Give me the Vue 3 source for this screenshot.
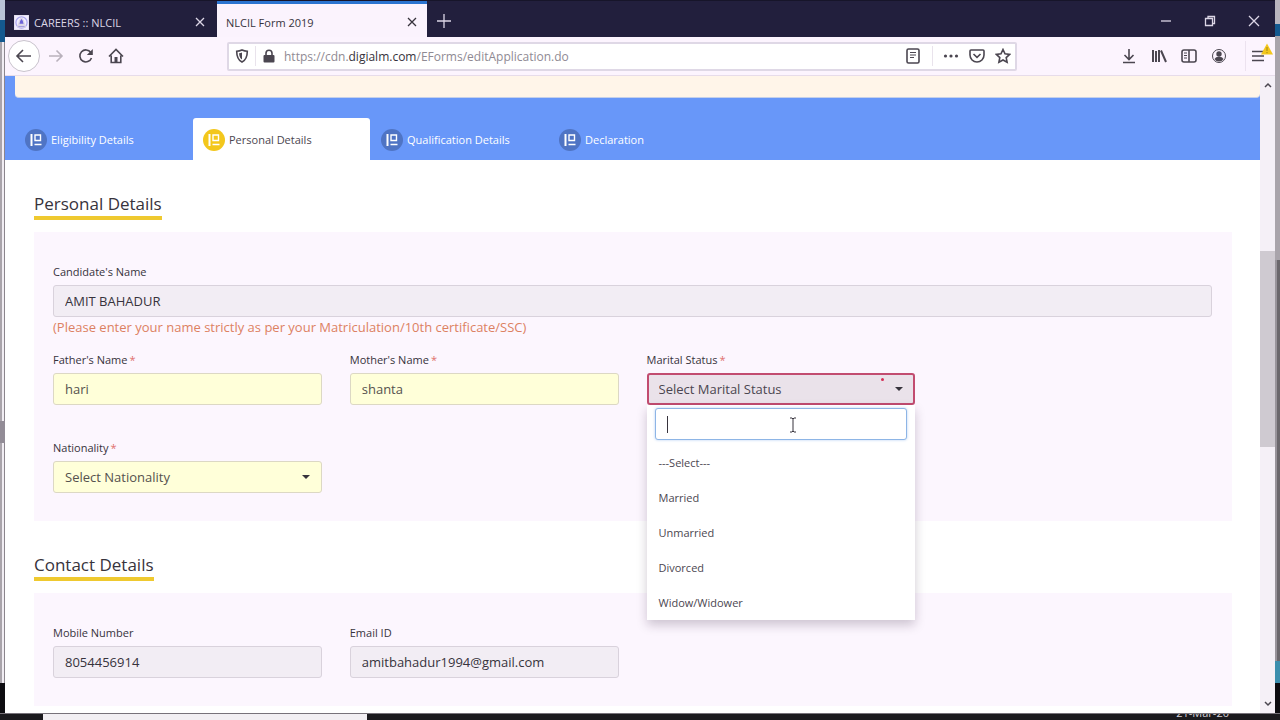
<template>
  <div class="desktop">
    <div class="workspace">
      <div class="edge edge-left">
        <i class="edge-top"></i>
        <i class="edge-blue"></i>
        <i class="edge-lines"></i>
        <i class="edge-mark"></i>
        <i class="edge-lines"></i>
        <i class="edge-dark"></i>
      </div>

      <div class="browser">
        <!-- Tab strip -->
        <header class="tab-strip">
          <div class="tab">
            <svg class="favicon" viewBox="0 0 16 16">
              <rect width="16" height="16" fill="#f1edff" />
              <circle cx="8" cy="8" r="6" fill="none" stroke="#aaa4ee" />
              <path d="M8 3l2 3 1 4H5l1-4zM4 11h8v2H4z" fill="#6c63d8" />
            </svg>
            <span class="tab-title">CAREERS :: NLCIL</span>
            <button class="icon-btn" aria-label="Close tab">
              <svg width="12" height="12" viewBox="0 0 12 12"><path d="M2 2l8 8M10 2l-8 8" /></svg>
            </button>
          </div>
          <div class="tab tab-current">
            <span class="tab-title">NLCIL Form 2019</span>
            <button class="icon-btn" aria-label="Close tab">
              <svg width="12" height="12" viewBox="0 0 12 12"><path d="M2 2l8 8M10 2l-8 8" /></svg>
            </button>
          </div>
          <button class="icon-btn new-tab" aria-label="New tab">
            <svg width="14" height="14" viewBox="0 0 14 14"><path d="M7 0v14M0 7h14" /></svg>
          </button>
          <div class="window-controls">
            <button class="icon-btn" aria-label="Minimize">
              <svg width="12" height="12" viewBox="0 0 12 12"><path d="M1 6h10" /></svg>
            </button>
            <button class="icon-btn" aria-label="Restore">
              <svg width="12" height="12" viewBox="0 0 12 12">
                <path d="M1.500 3.500h7v7h-7zM4 3V1.500h6.500V8.500H9" />
              </svg>
            </button>
            <button class="icon-btn" aria-label="Close">
              <svg width="12" height="12" viewBox="0 0 12 12"><path d="M1 1l10 10M11 1L1 11" /></svg>
            </button>
          </div>
        </header>

        <!-- Toolbar -->
        <nav class="toolbar">
          <div class="nav-buttons">
            <button class="icon-btn back" aria-label="Back">
              <svg width="18" height="18" viewBox="0 0 18 18"><path d="M16 9H2.500M8 3L2 9l6 6" /></svg>
            </button>
            <button class="icon-btn forward" aria-label="Forward">
              <svg width="16" height="16" viewBox="0 0 16 16"><path d="M1 8h13M8.500 2.500L14 8l-5.500 5.500" /></svg>
            </button>
            <button class="icon-btn" aria-label="Reload">
              <svg width="16" height="16" viewBox="0 0 16 16">
                <path d="M12.800 4.500A6 6 0 1 0 13.500 10" />
                <path class="solid" d="M14.800 1v6H8.800z" />
              </svg>
            </button>
            <button class="icon-btn" aria-label="Home">
              <svg width="16" height="16" viewBox="0 0 16 16">
                <path d="M1 8.500L8 1.500l7 7M3.200 7.500v7h9.600v-7" />
                <path class="solid" d="M6.500 9h3v5.500h-3z" />
              </svg>
            </button>
          </div>

          <div class="url-bar">
            <div class="url-shield">
              <svg width="14" height="14" viewBox="0 0 14 14">
                <path d="M7 1c2 .9 3.500 1.200 5.300 1.200C12.300 7.500 11 11 7 13 3 11 1.700 7.500 1.700 2.200 3.500 2.200 5 1.900 7 1z" />
                <path class="solid" d="M7 3.500v7C5 9.300 4.200 7 4.100 4.200 5.200 4.100 6.100 3.900 7 3.500z" />
              </svg>
            </div>
            <svg class="lock" width="14" height="14" viewBox="0 0 14 14">
              <rect class="solid" x="1.500" y="6" width="11" height="7.500" rx="1" />
              <path d="M4 6.500V4.300a3 3 0 0 1 6 0v2.200" />
            </svg>
            <span class="url">https://cdn.<b>digialm.com</b>/EForms/editApplication.do</span>
            <div class="url-reader">
              <svg width="14" height="16" viewBox="0 0 14 16">
                <rect x="1" y="1" width="12" height="14" rx="1.500" />
                <path class="thin" d="M4 4.500h6M4 7h6M4 9.500h4" />
              </svg>
            </div>
            <svg width="16" height="16" viewBox="0 0 16 16">
              <circle class="solid" cx="2.500" cy="8" r="1.600" />
              <circle class="solid" cx="8" cy="8" r="1.600" />
              <circle class="solid" cx="13.500" cy="8" r="1.600" />
            </svg>
            <svg width="16" height="16" viewBox="0 0 16 16">
              <path d="M2 2h12q1 0 1 1v4a7 7 0 0 1-14 0V3q0-1 1-1z" />
              <path d="M4.500 6L8 9.300 11.500 6" />
            </svg>
            <svg width="16" height="16" viewBox="0 0 16 16">
              <path d="M8 1.500l2 4.300 4.700.6-3.500 3.200.9 4.700L8 12l-4.100 2.300.9-4.700L1.300 6.400 6 5.800z" />
            </svg>
          </div>

          <div class="tool-buttons">
            <button class="icon-btn" aria-label="Downloads">
              <svg width="16" height="16" viewBox="0 0 16 16"><path d="M8 1v10M3.500 7L8 11.500 12.500 7M2 14.500h12" /></svg>
            </button>
            <button class="icon-btn" aria-label="Library">
              <svg width="16" height="16" viewBox="0 0 16 16">
                <path class="books" d="M2 2v12M5 3v11M8 2v12M10 2.500L15 14" />
              </svg>
            </button>
            <button class="icon-btn" aria-label="Sidebars">
              <svg width="16" height="16" viewBox="0 0 16 16">
                <rect x="1" y="2" width="14" height="12" rx="2" />
                <path d="M8 2v12" />
                <path class="thin" d="M3 5h3M3 7.500h3M3 10h3" />
              </svg>
            </button>
            <button class="icon-btn" aria-label="Account">
              <svg width="16" height="16" viewBox="0 0 16 16">
                <circle class="thin" cx="8" cy="8" r="6.500" />
                <circle class="solid" cx="8" cy="6" r="2.700" />
                <path class="solid" d="M3.500 11q1-2.300 4.500-2.300t4.500 2.300q-1.500 2.500-4.500 2.500T3.500 11z" />
              </svg>
            </button>
            <button class="icon-btn menu" aria-label="Menu">
              <svg width="12" height="14" viewBox="0 0 12 14"><path d="M0 2.500h12M0 7h12M0 11.500h12" /></svg>
              <svg class="warning" width="12" height="12" viewBox="0 0 12 12">
                <path d="M6 .5L12 11.500H0z" />
                <path class="warning-mark" d="M6 4v4M6 9v1.200" />
              </svg>
            </button>
          </div>
        </nav>

        <!-- Page -->
        <div class="viewport">
          <main class="page">
            <div class="banner">
              <div class="notice"></div>
              <nav class="steps">
                <a v-for="step in steps" :key="step" href="#" class="step" :class="{ active: step === activeStep }">
                  <svg class="step-icon" viewBox="0 0 22 22">
                    <circle cx="11" cy="11" r="11" />
                    <path class="step-bar" d="M6.500 5v12" />
                    <path d="M10 6h5.500v5.500H10zM9.500 15.500h7" />
                  </svg>
                  {{ step }}
                </a>
              </nav>
            </div>

            <section class="section">
              <h2>Personal Details</h2>
              <form class="panel">
                <div class="field wide">
                  <label for="candidate">Candidate's Name</label>
                  <input id="candidate" class="control" type="text" value="AMIT BAHADUR" readonly />
                  <p class="hint">(Please enter your name strictly as per your Matriculation/10th certificate/SSC)</p>
                </div>
                <div class="field">
                  <label for="father">Father's Name<em>*</em></label>
                  <input id="father" v-model="father" class="control required" type="text" />
                </div>
                <div class="field">
                  <label for="mother">Mother's Name<em>*</em></label>
                  <input id="mother" v-model="mother" class="control required" type="text" />
                </div>
                <div class="field">
                  <label for="marital">Marital Status<em>*</em></label>
                  <div class="select-wrap">
                    <select id="marital" v-model="marital" class="control invalid">
                      <option value="">Select Marital Status</option>
                      <option v-for="item in maritalOptions" :key="item">{{ item }}</option>
                    </select>
                    <svg class="caret" viewBox="0 0 8 4"><path d="M0 0h8L4 4z" /></svg>
                    <i class="dot"></i>
                    <div class="menu-list">
                      <div class="search">
                        <input v-model="search" class="control" type="text" aria-label="Search marital status" />
                        <i class="text-cursor"></i>
                        <svg class="pointer" viewBox="0 0 8 16">
                          <path d="M1 1h2l1 1 1-1h2M4 2v12M1 15h2l1-1 1 1h2" />
                        </svg>
                      </div>
                      <ul>
                        <li v-for="item in filteredOptions" :key="item" @click="marital = item">{{ item }}</li>
                      </ul>
                    </div>
                  </div>
                </div>
                <div class="field field-start">
                  <label for="nationality">Nationality<em>*</em></label>
                  <div class="select-wrap">
                    <select id="nationality" class="control required">
                      <option>Select Nationality</option>
                    </select>
                    <svg class="caret" viewBox="0 0 8 4"><path d="M0 0h8L4 4z" /></svg>
                  </div>
                </div>
              </form>
            </section>

            <section class="section">
              <h2>Contact Details</h2>
              <form class="panel">
                <div class="field">
                  <label for="mobile">Mobile Number</label>
                  <input id="mobile" class="control" type="text" value="8054456914" readonly />
                </div>
                <div class="field">
                  <label for="email">Email ID</label>
                  <input id="email" class="control" type="text" value="amitbahadur1994@gmail.com" readonly />
                </div>
              </form>
            </section>
          </main>

          <div class="scrollbar">
            <svg viewBox="0 0 8 6"><path d="M1 5l3-3 3 3" /></svg>
            <div class="track"><div class="thumb"></div></div>
            <svg viewBox="0 0 8 6"><path d="M1 1l3 3 3-3" /></svg>
          </div>
        </div>
      </div>

      <div class="edge edge-right">
        <i class="edge-light"></i>
        <i class="edge-blue"></i>
        <i class="edge-light"></i>
        <i class="edge-grey"></i>
        <i class="edge-teal"></i>
        <i class="edge-dark"></i>
      </div>
    </div>

    <footer class="taskbar">
      <div class="taskbar-search"></div>
      <time class="clock">21-Mar-20</time>
    </footer>
  </div>
</template>

<script setup>
import { computed, ref } from 'vue'

const steps = ['Eligibility Details', 'Personal Details', 'Qualification Details', 'Declaration']
const activeStep = 'Personal Details'

const father = ref('hari')
const mother = ref('shanta')
const marital = ref('')
const search = ref('')

const maritalOptions = ['---Select---', 'Married', 'Unmarried', 'Divorced', 'Widow/Widower']

const filteredOptions = computed(() =>
  maritalOptions.filter((item) => item.toLowerCase().includes(search.value.toLowerCase()))
)
</script>

<style>
body {
  margin: 0;
  overflow: hidden;
}
</style>

<style scoped>
* {
  box-sizing: border-box;
}

.desktop {
  display: flex;
  flex-direction: column;
  height: 100vh;
  overflow: hidden;
  background: #1b1a1e;
  font-family: "Open Sans", "Noto Sans", sans-serif;
  font-size: 13px;
  color: #37333c;
}

.workspace {
  flex: 1;
  display: flex;
  min-height: 0;
}

/* What shows of the windows behind */
.edge {
  flex: none;
  display: flex;
  flex-direction: column;
  width: 5px;
}
.edge-top { height: 20px; background: #b9c3d6; }
.edge-blue { height: 22px; background: #14598f; }
.edge-lines {
  flex: 1;
  background: linear-gradient(90deg, #a9a4ab 0 2px, #f1edf3 2px 4px, #8b858d 4px);
}
.edge-mark { height: 22px; background: #928c96; }
.edge-dark { height: 30px; background: #0d0c10; }
.edge-left .edge-lines:nth-of-type(5) { flex: none; height: 240px; }
.edge-light { height: 24px; background: #b9b5be; }
.edge-right .edge-blue { height: 12px; }
.edge-right .edge-light:nth-of-type(3) { height: 224px; background: #a9a4ab; }
.edge-grey { flex: 1; background: linear-gradient(90deg, #99949b 0 2px, #6b676c 2px); }
.edge-teal { height: 22px; background: #3c8fae; }

.browser {
  flex: 1;
  display: flex;
  flex-direction: column;
  min-width: 0;
  background: #fff;
}

.icon-btn {
  display: flex;
  align-items: center;
  justify-content: center;
  padding: 0;
  border: 0;
  background: none;
  color: inherit;
}

.tab-strip svg,
.toolbar svg {
  flex: none;
  fill: none;
  stroke: currentColor;
  stroke-width: 1.6;
}
.tab-strip svg { stroke-width: 1.3; }
.toolbar svg .solid { fill: currentColor; stroke: none; }
.toolbar svg .thin { stroke-width: 1; }
.toolbar svg .books { stroke-width: 2; }

/* Tab strip */
.tab-strip {
  flex: none;
  display: flex;
  height: 37px;
  border-top: 1px solid #17152a;
  background: #221f3d;
  color: #dcd6e6;
}

.tab {
  display: flex;
  align-items: center;
  width: 212px;
  padding: 6px 11px 0 9px;
  font-size: 11px;
}
.tab-title { flex: 1; }
.tab-current {
  width: 210px;
  padding: 3px 9px 0;
  border-top: 3px solid #2b74d0;
  background: #fbf3fd;
  color: #37333c;
}
.tab-strip .favicon {
  width: 15px;
  height: 15px;
  margin-right: 5px;
}
.new-tab { padding: 4px 10px 0; }
.window-controls {
  display: flex;
  gap: 32px;
  margin-left: auto;
  padding: 4px 15px 0 0;
}

/* Toolbar */
.toolbar {
  flex: none;
  display: flex;
  align-items: center;
  height: 39px;
  border-bottom: 1px solid #e7dcea;
  background: #fcf4fe;
  color: #4b4650;
}
.nav-buttons {
  display: flex;
  align-items: center;
  gap: 14px;
  width: 222px;
  padding-left: 3px;
}
.back {
  width: 32px;
  height: 32px;
  margin-right: -6px;
  border: 1px solid #c9c3cd;
  border-radius: 50%;
  background: #fff;
}
.forward { color: #b9b1bc; }

.url-bar {
  display: flex;
  align-items: center;
  gap: 10px;
  flex: 1;
  height: 29px;
  padding: 0 4px 0 6px;
  border: 2px solid #dfd8e6;
  border-radius: 2px;
  background: #fff;
}
.url-shield,
.url-reader {
  display: flex;
  align-items: center;
  height: 20px;
  border-right: 1px solid #e9e3ec;
}
.url-shield { padding-right: 6px; }
.url-reader { padding-right: 12px; }
.lock { margin: 0 -2px 0 -4px; }
.url {
  flex: 1;
  font-size: 12px;
  color: #8f8a93;
}
.url b {
  font-weight: 400;
  color: #37333c;
}

.tool-buttons {
  display: flex;
  align-items: center;
  gap: 14px;
  width: 258px;
  padding-right: 11px;
  justify-content: flex-end;
}
.menu {
  position: relative;
  height: 30px;
  margin-left: 4px;
  padding-left: 6px;
  border-left: 1px solid #ece2ef;
}
.menu .warning {
  position: absolute;
  top: 2px;
  right: -9px;
  fill: #f3c71c;
  stroke: none;
}
.menu .warning .warning-mark { stroke: #a48512; stroke-width: 1; }

/* Page */
.viewport {
  flex: 1;
  display: flex;
  min-height: 0;
}
.page {
  flex: 1;
  min-width: 0;
  overflow: hidden;
}

.banner {
  padding-left: 10px;
  background: #6897f9;
}
.notice {
  height: 22px;
  border-bottom: 1px solid #c5d0ea;
  border-radius: 0 0 4px 4px;
  background: #fff5e9;
}
.steps {
  display: flex;
  gap: 1px;
  padding-top: 20px;
}
.step {
  display: flex;
  align-items: center;
  gap: 4px;
  width: 177px;
  height: 42px;
  padding: 1px 0 0 10px;
  border-radius: 3px 3px 0 0;
  font-size: 11px;
  color: #fff;
  text-decoration: none;
}
.step.active {
  background: #fff;
  color: #4b4650;
}
.step-icon {
  width: 22px;
  height: 22px;
  fill: none;
  stroke: #fff;
  stroke-width: 1.4;
}
.step-icon circle { fill: #4f74c4; stroke: none; }
.step-icon .step-bar { stroke-width: 2; }
.step.active .step-icon circle { fill: #f3c71c; }

.section {
  padding: 32px 28px 0 29px;
}
h2 {
  width: fit-content;
  height: 28px;
  margin: 0 0 12px;
  border-bottom: 4px solid #efc92f;
  font-size: 17px;
  font-weight: 400;
  line-height: 24px;
}

.panel {
  display: grid;
  grid-template-columns: repeat(4, 1fr);
  gap: 35px 28px;
  padding: 32px 20px 28px 19px;
  background: #fcf6fe;
}

.wide { grid-column: 1 / -1; height: 53px; }
.field-start { grid-column: 1; }

label {
  display: block;
  height: 21px;
  font-size: 11px;
  line-height: 16px;
}
label em {
  margin-left: 2px;
  font-style: normal;
  color: #e0706c;
}

.control {
  display: block;
  width: 100%;
  height: 32px;
  padding: 0 11px;
  border: 1px solid #d9d2dc;
  border-radius: 3px;
  background: #f2edf4;
  color: #37333c;
  font-family: inherit;
  font-size: 13px;
  outline: none;
  appearance: none;
}
.control.required {
  border-color: #dcd8c4;
  background: #ffffd9;
  color: #55514e;
}
.control.invalid {
  padding: 0 10px;
  border: 2px solid #c24c70;
  background: #eae2ea;
  color: #4b4650;
}

.hint {
  margin: 0;
  font-size: 13px;
  line-height: 20px;
  color: #dc8162;
}

.select-wrap { position: relative; }
.caret {
  position: absolute;
  top: 14px;
  right: 12px;
  width: 8px;
  height: 4px;
  fill: #37333c;
}
.dot {
  position: absolute;
  top: 5px;
  right: 31px;
  width: 3px;
  height: 3px;
  border-radius: 50%;
  background: #d62f57;
}

.menu-list {
  position: absolute;
  z-index: 2;
  top: 32px;
  left: 0;
  right: 0;
  padding: 3px 8px 0;
  background: #fff;
  box-shadow: 0 5px 10px rgba(40, 20, 50, 0.22);
}
.search { position: relative; }
.search .control {
  border-color: #8db5e6;
  background: #fff;
  box-shadow: 0 0 3px #b5d0f2;
}
.text-cursor {
  position: absolute;
  top: 8px;
  left: 12px;
  width: 1px;
  height: 17px;
  background: #37333c;
}
.pointer {
  position: absolute;
  top: 9px;
  left: 134px;
  width: 8px;
  height: 16px;
  fill: none;
  stroke: #37333c;
}
ul {
  margin: 0;
  padding: 5px 4px 0;
  list-style: none;
}
li {
  height: 35px;
  font-size: 11px;
  line-height: 35px;
  color: #4b4650;
}

/* Scrollbar */
.scrollbar {
  flex: none;
  display: flex;
  flex-direction: column;
  align-items: center;
  width: 15px;
  padding: 6px 0;
  background: #f5f0f7;
}
.scrollbar svg {
  width: 8px;
  height: 6px;
  fill: none;
  stroke: #4b4650;
  stroke-width: 1.5;
}
.track {
  flex: 1;
  width: 100%;
  padding-top: 163px;
}
.thumb {
  height: 196px;
  background: #cfcad1;
}

/* Taskbar */
.taskbar {
  flex: none;
  display: flex;
  justify-content: space-between;
  height: 7px;
  padding: 0 51px 0 43px;
  border-top: 1px solid #77727a;
  overflow: hidden;
}
.taskbar-search {
  width: 324px;
  background: #f2eff3;
}
.clock {
  margin-top: -8px;
  font-size: 11px;
  line-height: 14px;
  color: #d5d1d8;
}
</style>
